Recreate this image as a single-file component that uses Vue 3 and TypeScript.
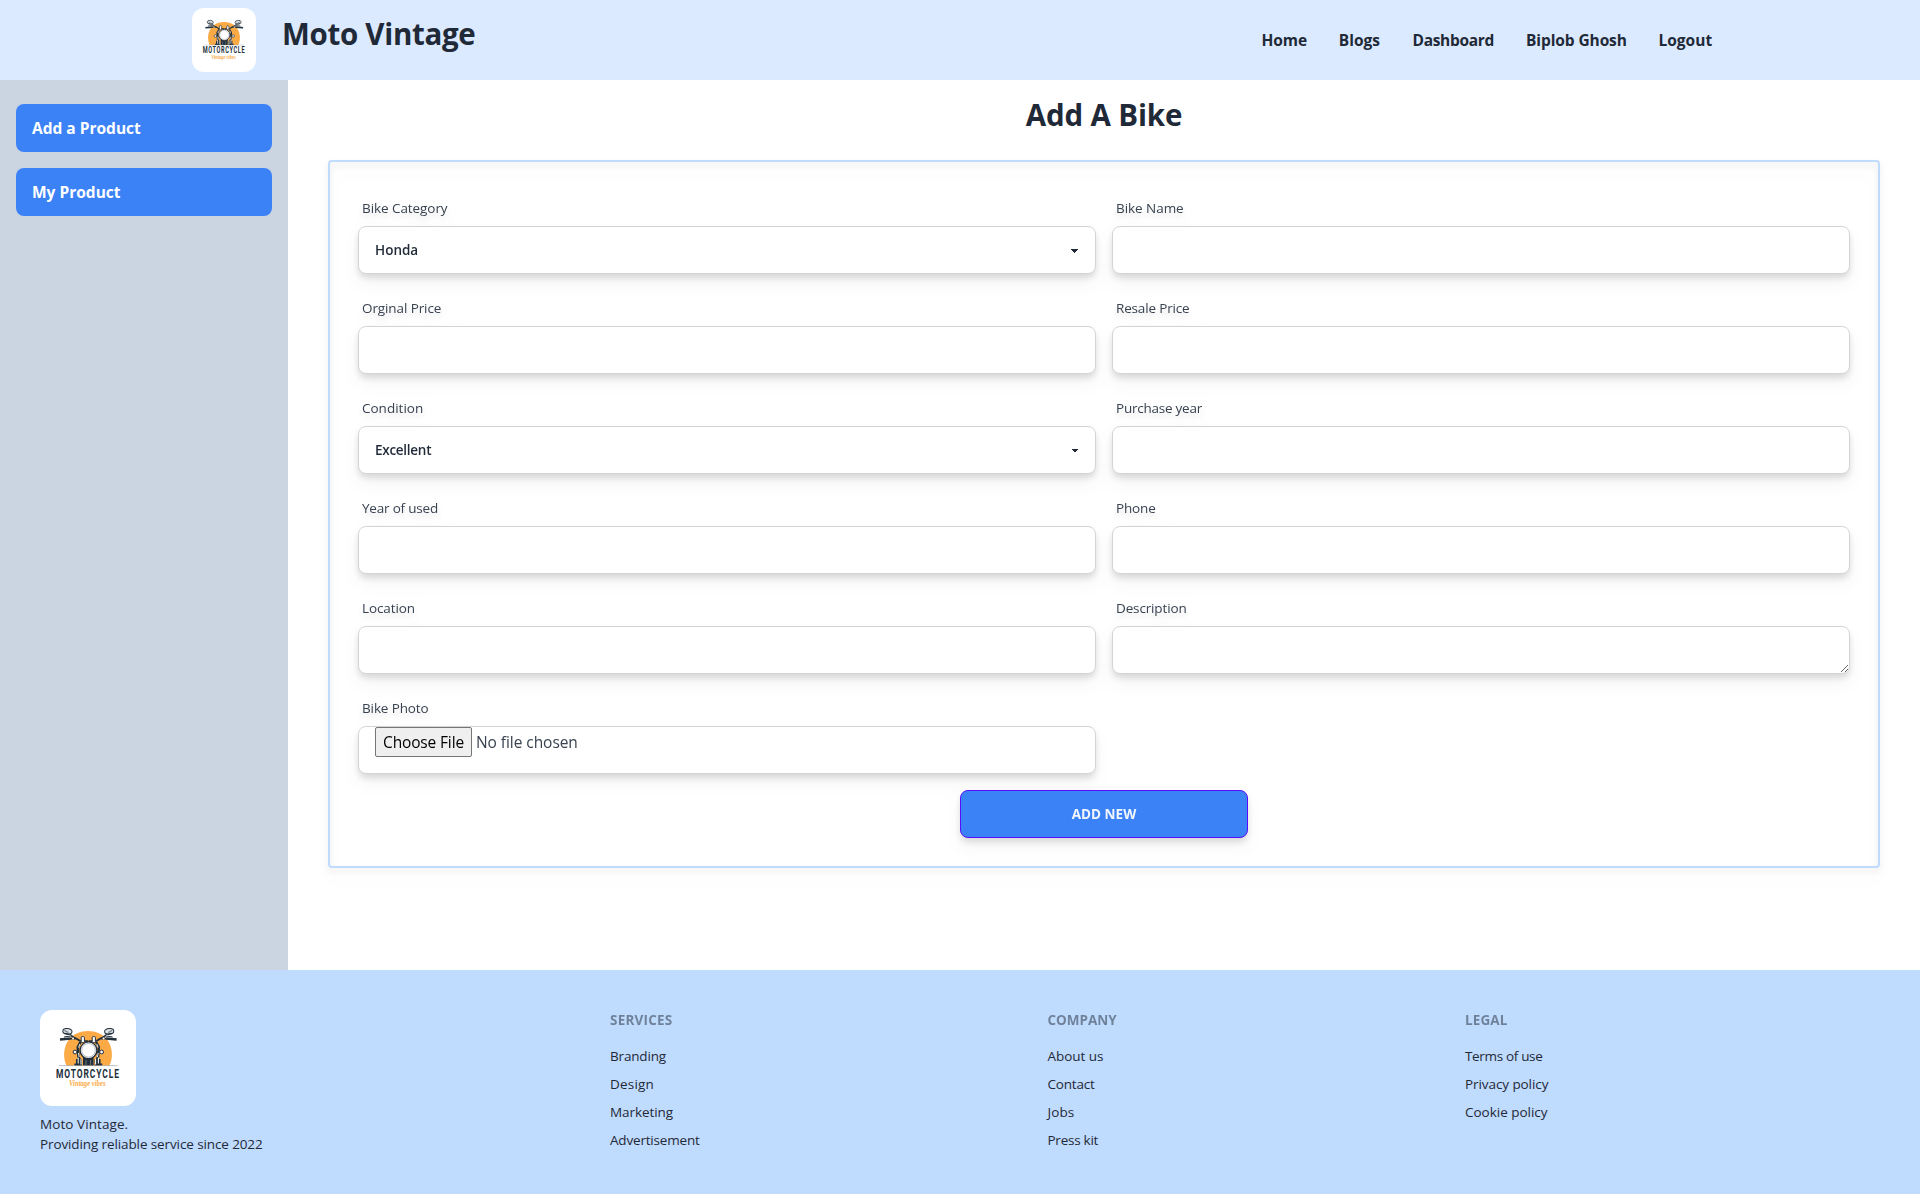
<script setup lang="ts">
import { defineComponent, h } from 'vue'

interface Label {
  text: string
  track?: number
}

interface Field extends Label {
  kind: 'select' | 'input' | 'textarea' | 'file'
  value?: string
  valueTrack?: number
}

interface FooterColumn extends Label {
  links: Label[]
}

const navLinks: (Label & { width: number })[] = [
  { text: 'Home', track: -0.1, width: 45.3 },
  { text: 'Blogs', width: 41.7 },
  { text: 'Dashboard', track: -0.32, width: 81.5 },
  { text: 'Biplob Ghosh', track: -0.1, width: 100.5 },
  { text: 'Logout', width: 53.5 },
]

const menu: string[] = ['Add a Product', 'My Product']

const fields: Field[] = [
  { text: 'Bike Category', track: -0.07, kind: 'select', value: 'Honda' },
  { text: 'Bike Name', track: -0.05, kind: 'input' },
  { text: 'Orginal Price', track: -0.1, kind: 'input' },
  { text: 'Resale Price', track: -0.16, kind: 'input' },
  { text: 'Condition', kind: 'select', value: 'Excellent', valueTrack: -0.27 },
  { text: 'Purchase year', track: -0.24, kind: 'input' },
  { text: 'Year of used', track: -0.2, kind: 'input' },
  { text: 'Phone', track: -0.15, kind: 'input' },
  { text: 'Location', track: -0.1, kind: 'input' },
  { text: 'Description', track: -0.14, kind: 'textarea' },
  { text: 'Bike Photo', track: -0.12, kind: 'file' },
]

const columns: FooterColumn[] = [
  {
    text: 'Services',
    track: 0.2,
    links: [
      { text: 'Branding', track: -0.17 },
      { text: 'Design', track: 0.2 },
      { text: 'Marketing', track: -0.08 },
      { text: 'Advertisement', track: -0.18 },
    ],
  },
  {
    text: 'Company',
    links: [
      { text: 'About us', track: -0.05 },
      { text: 'Contact', track: -0.2 },
      { text: 'Jobs', track: 0.1 },
      { text: 'Press kit', track: -0.25 },
    ],
  },
  {
    text: 'Legal',
    track: 0.1,
    links: [
      { text: 'Terms of use', track: -0.33 },
      { text: 'Privacy policy', track: -0.08 },
      { text: 'Cookie policy', track: -0.02 },
    ],
  },
]

const spacing = (track?: number) => (track ? { letterSpacing: `${track}px` } : undefined)

const dark = '#22303c'
const orange = '#fbaa45'

// One side of the motorcycle front; the other side is its mirror image.
const halfBike = () => [
  h('ellipse', { cx: 27.4, cy: 21.4, rx: 4.6, ry: 2.9, fill: '#dfe3e6', stroke: dark, 'stroke-width': 1, transform: 'rotate(8 27.4 21.4)' }),
  h('path', { d: 'M24.4 20.4L28.4 22.6', stroke: '#7d878f', 'stroke-width': 1.2, fill: 'none' }),
  h('path', { d: 'M24.5 23.4L30.5 24.2M30 23.5L33.5 28.5', stroke: dark, 'stroke-width': 1.1, fill: 'none' }),
  h('path', { d: 'M20 29.6L30.5 28.6', stroke: dark, 'stroke-width': 2.5, fill: 'none' }),
  h('path', { d: 'M24 27L32 25.8L36 28.4', stroke: dark, 'stroke-width': 1.1, fill: 'none' }),
  h('path', { d: 'M30 28.6L36 28.4L40 30.8L48 31.2', stroke: dark, 'stroke-width': 1.7, fill: 'none' }),
  h('circle', { cx: 33, cy: 28.6, r: 1, fill: '#fff' }),
  h('rect', { x: 41.2, y: 26.6, width: 3.2, height: 6, rx: 1, fill: '#fff', stroke: dark, 'stroke-width': 1 }),
  h('path', { d: 'M40.5 32L37.8 37L38.5 47L41 52', stroke: dark, 'stroke-width': 2.6, fill: 'none' }),
  h('path', { d: 'M39.8 34L38.6 37.5M38.4 43L39.2 47', stroke: '#fff', 'stroke-width': 0.9, fill: 'none' }),
  h('circle', { cx: 35, cy: 42, r: 1.9, fill: '#fff', stroke: dark, 'stroke-width': 1 }),
  h('path', { d: 'M36 49H42V55.5H34.4V53.5H36Z', fill: dark }),
  h('path', { d: 'M38.2 47.5V53.5M41 49V54.5', stroke: '#fff', 'stroke-width': 1 }),
]

const MotoLogo = defineComponent({
  render: () =>
    h('svg', { viewBox: '0 0 96 96', role: 'img', 'aria-label': 'Moto Vintage logo' }, [
      h('rect', { width: 96, height: 96, fill: '#fff' }),
      h('path', { d: 'M26.5 55.5C22.8 48 23.3 37.5 28.5 30C37.5 18 58.5 18 67.5 30C72.7 37.5 73.2 48 69.5 55.5Z', fill: orange }),
      h('g', halfBike()),
      h('g', { transform: 'translate(96.6 0) scale(-1 1)' }, halfBike()),
      h('path', { d: 'M43 46H53.6V55.5H43Z', fill: dark }),
      h('path', { d: 'M46 50V55M50.6 50V55', stroke: '#8b949b', 'stroke-width': 0.7 }),
      h('circle', { cx: 48.5, cy: 40.3, r: 8.4, fill: '#fff', stroke: dark, 'stroke-width': 1.3 }),
      h('circle', { cx: 48.5, cy: 40.3, r: 6.8, fill: '#fff', stroke: '#a3abb1', 'stroke-width': 0.8 }),
      h('path', { d: 'M19 55.6H77.5', stroke: '#7d878f', 'stroke-width': 0.5 }),
      h('g', { transform: 'translate(16 68) scale(0.68 1)' }, [
        h('text', { x: 0, y: 0, 'font-family': 'Roboto, sans-serif', 'font-weight': 700, 'font-size': 12.4, fill: dark, textLength: 92.5, lengthAdjust: 'spacing' }, 'MOTORCYCLE'),
      ]),
      h('text', { x: 29, y: 76, 'font-family': '"Liberation Serif", serif', 'font-style': 'italic', 'font-weight': 700, 'font-size': 7.6, fill: orange, textLength: 36.5, lengthAdjust: 'spacingAndGlyphs' }, 'Vintage vibes'),
    ]),
})
</script>

<template>
  <div class="page">
    <header class="header">
      <div class="brand">
        <MotoLogo class="brand-logo" />
        <span class="brand-name">Moto Vintage</span>
      </div>
      <nav class="nav">
        <a v-for="link in navLinks" :key="link.text" :style="{ width: `${link.width}px`, ...spacing(link.track) }">{{ link.text }}</a>
      </nav>
    </header>

    <div class="body">
      <aside class="sidebar">
        <a v-for="item in menu" :key="item" class="menu-item">{{ item }}</a>
      </aside>

      <main class="main">
        <h1 class="title">Add A Bike</h1>
        <form class="form" @submit.prevent>
          <div class="fields">
            <div v-for="field in fields" :key="field.text" class="field">
              <label class="label" :style="spacing(field.track)">{{ field.text }}</label>
              <select v-if="field.kind === 'select'" class="control select" :style="spacing(field.valueTrack)">
                <option>{{ field.value }}</option>
              </select>
              <textarea v-else-if="field.kind === 'textarea'" class="control"></textarea>
              <div v-else-if="field.kind === 'file'" class="control file">
                <button type="button" class="file-button">Choose File</button>
                <span class="file-name">No file chosen</span>
              </div>
              <input v-else type="text" class="control" />
            </div>
          </div>
          <button type="submit" class="submit">ADD NEW</button>
        </form>
      </main>
    </div>

    <footer class="footer">
      <div>
        <MotoLogo class="footer-logo" />
        <p class="about"><span class="about-name">Moto Vintage.</span><br />Providing reliable service since 2022</p>
      </div>
      <div v-for="column in columns" :key="column.text" class="column">
        <span class="column-title" :style="spacing(column.track)">{{ column.text }}</span>
        <a v-for="link in column.links" :key="link.text" :style="spacing(link.track)">{{ link.text }}</a>
      </div>
    </footer>
  </div>
</template>

<style>
body {
  margin: 0;
  background: #fff;
}
</style>

<style scoped>
.page,
.page * {
  box-sizing: border-box;
}

.page {
  height: 1194px;
  display: flex;
  flex-direction: column;
  overflow: hidden;
  color: #1f2937;
  font-family: "Open Sans", "Noto Sans", sans-serif;
  font-size: 15.5px;
  line-height: 24px;
}

.header {
  height: 80px;
  padding: 8px 208px 8px 192px;
  display: flex;
  justify-content: space-between;
  background: #dbeafe;
}

.brand {
  display: flex;
  gap: 26px;
}

.brand-logo {
  width: 64px;
  height: 64px;
  border-radius: 12px;
}

.brand-name {
  margin-top: 8px;
  height: 36px;
  font-size: 29.5px;
  line-height: 36px;
  font-weight: 700;
  letter-spacing: -0.3px;
  white-space: nowrap;
}

.nav {
  display: flex;
  align-items: center;
  gap: 32px;
  font-weight: 700;
  white-space: nowrap;
}

.body {
  flex: 1;
  display: flex;
}

.sidebar {
  width: 288px;
  padding: 24px 16px;
  display: flex;
  flex-direction: column;
  gap: 16px;
  background: #cbd5e1;
}

.menu-item {
  padding: 12px 16px;
  border-radius: 8px;
  background: #3b82f6;
  color: #fff;
  font-weight: 700;
}

.main {
  flex: 1;
  padding: 17px 40px 0;
}

.title {
  margin: 0 0 27px;
  font-size: 29.5px;
  line-height: 36px;
  font-weight: 700;
  letter-spacing: -0.15px;
  text-align: center;
}

.form {
  padding: 28px;
  border: 2px solid #bfdbfe;
  border-radius: 4px;
  display: flex;
  flex-direction: column;
  align-items: center;
  gap: 16px;
  filter: drop-shadow(0 10px 8px rgb(0 0 0 / 0.04)) drop-shadow(0 4px 3px rgb(0 0 0 / 0.12));
}

.fields {
  width: 100%;
  display: grid;
  grid-template-columns: 1fr 1fr;
  gap: 16px;
}

.field {
  display: flex;
  flex-direction: column;
}

.label {
  padding: 8px 4px;
  color: #384250;
  font-size: 13.5px;
  line-height: 20px;
}

.control {
  width: 100%;
  height: 48px;
  margin: 0;
  padding: 0 16px;
  border: 1px solid #d2d4d7;
  border-radius: 8px;
  background-color: #fff;
  color: inherit;
  font: inherit;
}

.select {
  appearance: none;
  padding-right: 40px;
  font-size: 13.5px;
  font-weight: 600;
  background-image: linear-gradient(45deg, transparent 50%, currentColor 50%),
    linear-gradient(135deg, currentColor 50%, transparent 50%);
  background-position: calc(100% - 20px) calc(1px + 50%), calc(100% - 16px) calc(1px + 50%);
  background-size: 4px 4px, 4px 4px;
  background-repeat: no-repeat;
}

textarea.control {
  display: block;
}

.file {
  display: flex;
  align-items: flex-start;
  gap: 4px;
  white-space: nowrap;
}

.file-button {
  width: 97px;
  height: 30px;
  padding: 0;
  border: 1px solid #767676;
  border-radius: 2px;
  background: #efefef;
  color: #000;
  font: inherit;
  letter-spacing: -0.15px;
}

.file-name {
  color: #384250;
  line-height: 30px;
  letter-spacing: -0.06px;
}

.submit {
  width: 288px;
  height: 48px;
  padding: 0;
  border: 1px solid #570df8;
  border-radius: 8px;
  background: #3b82f6;
  color: #f2f6ff;
  font: 700 13.5px/20px "Open Sans", "Noto Sans", sans-serif;
}

.footer {
  height: 224px;
  padding: 40px;
  display: grid;
  grid-template-columns: 570px 437.5px 417.5px 1fr;
  background: #bfdbfe;
  font-size: 13.5px;
  line-height: 20px;
}

.footer-logo {
  display: block;
  width: 96px;
  height: 96px;
  border-radius: 12px;
}

.about {
  margin: 8px 0 0;
  letter-spacing: -0.11px;
}

.about-name {
  letter-spacing: 0.08px;
}

.column {
  display: flex;
  flex-direction: column;
  gap: 8px;
}

.column-title {
  margin-bottom: 8px;
  font-weight: 700;
  text-transform: uppercase;
  opacity: 0.5;
}
</style>
